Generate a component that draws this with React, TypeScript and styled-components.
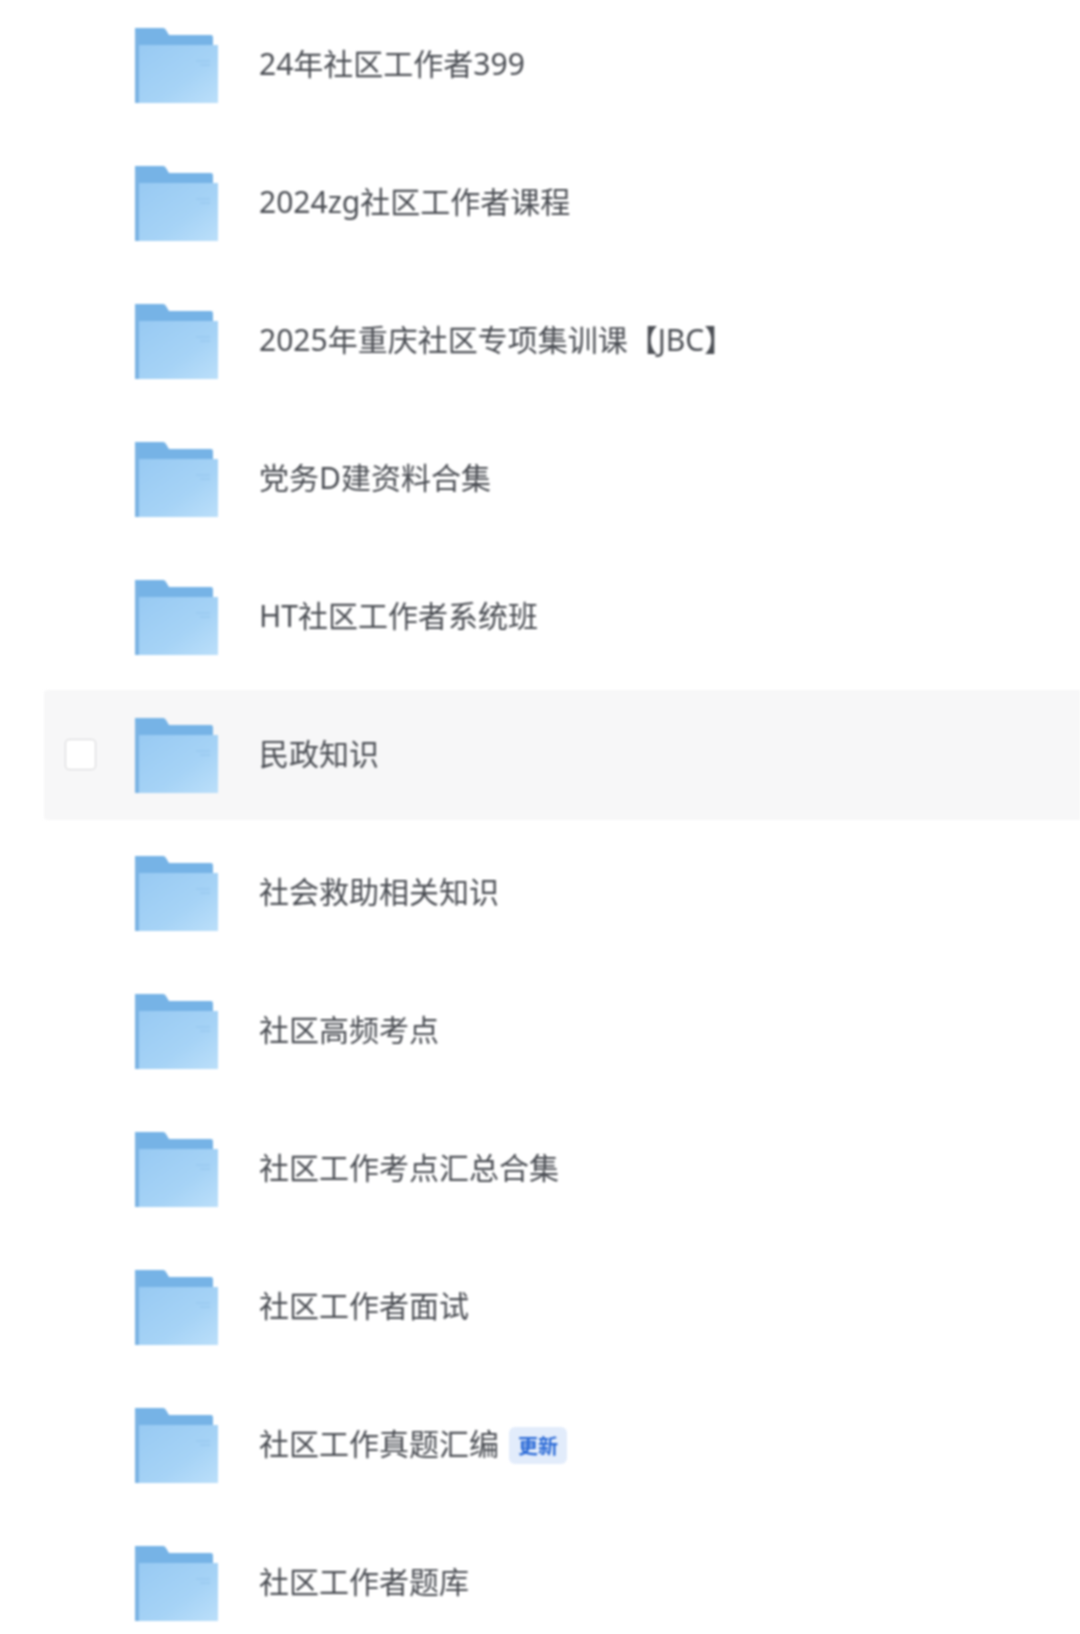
import { useId } from 'react';
import styled, { createGlobalStyle } from 'styled-components';

const GlobalStyle = createGlobalStyle`
	html, body {
		margin: 0;
		padding: 0;
		background: #fff;
	}
`;

const List = styled.div`
	width: 1080px;
	height: 1634px;
	overflow: hidden;
	box-sizing: border-box;
	padding-left: 44px;
	display: flex;
	flex-direction: column;
	gap: 8px;
	filter: blur(0.8px);
`;

const Row = styled.div<{ $active?: boolean }>`
	flex: none;
	height: 130px;
	display: flex;
	align-items: center;
	padding-left: 91px;
	position: relative;
	border-radius: 4px 0 0 4px;
	background: ${ (p) => (p.$active ? '#f7f7f8' : 'transparent') };
`;

const Checkbox = styled.span`
	position: absolute;
	left: 21px;
	top: 50%;
	width: 31px;
	height: 31px;
	margin-top: -16px;
	box-sizing: border-box;
	background: #fff;
	border: 1px solid #d6d6d8;
	border-radius: 4px;
`;

const FolderIcon = styled.svg`
	flex: none;
	width: 84px;
	height: 76px;
	margin-top: 2px;
	margin-right: 40px;
`;

const Name = styled.span`
	font-family: "Noto Sans", "Noto Sans CJK SC", sans-serif;
	font-size: 30px;
	line-height: 40px;
	padding-bottom: 2px;
	color: #4a4d53;
	white-space: nowrap;
`;

const Badge = styled.span`
	margin-left: 10px;
	width: 58px;
	height: 37px;
	display: flex;
	align-items: center;
	justify-content: center;
	border-radius: 6px;
	background: #e2ecfb;
	color: #2b6ad6;
	font-family: "Noto Sans CJK SC", sans-serif;
	font-size: 20px;
	font-weight: 700;
`;

const Folder = () => {
	const id = useId();

	return (
		<FolderIcon viewBox='0 0 84 76'>
			<defs>
				<linearGradient id={ `${ id }front` } x1='0' y1='0' x2='1' y2='1'>
					<stop offset='0' stopColor='#98caf3' />
					<stop offset='0.6' stopColor='#a6d3f6' />
					<stop offset='1' stopColor='#bbdffa' />
				</linearGradient>
			</defs>
			<path d='M0 0H28Q30 0 31 2L34 7H76Q78 7 78 10V20H0Z' fill='#76b3e6' />
			<path d='M4 17H83V75H4Z' fill={ `url(#${ id }front)` } />
			<path d='M0 5H4V75H0Z' fill='#7bb3e3' />
			<path d='M61 33H75M65 37H75' stroke='#93c4ec' strokeWidth='1' />
		</FolderIcon>
	);
};

const folders = [
	{ name: '24年社区工作者399' },
	{ name: '2024zg社区工作者课程' },
	{ name: '2025年重庆社区专项集训课【JBC】' },
	{ name: '党务D建资料合集' },
	{ name: 'HT社区工作者系统班' },
	{ name: '民政知识', active: true },
	{ name: '社会救助相关知识' },
	{ name: '社区高频考点' },
	{ name: '社区工作考点汇总合集' },
	{ name: '社区工作者面试' },
	{ name: '社区工作真题汇编', updated: true },
	{ name: '社区工作者题库' },
];

const App = () => (
	<>
		<GlobalStyle />
		<List>
			{
				folders.map((folder) => (
					<Row key={ folder.name } $active={ folder.active }>
						{ folder.active && <Checkbox /> }
						<Folder />
						<Name>{ folder.name }</Name>
						{ folder.updated && <Badge>更新</Badge> }
					</Row>
				))
			}
		</List>
	</>
);

export default App;
